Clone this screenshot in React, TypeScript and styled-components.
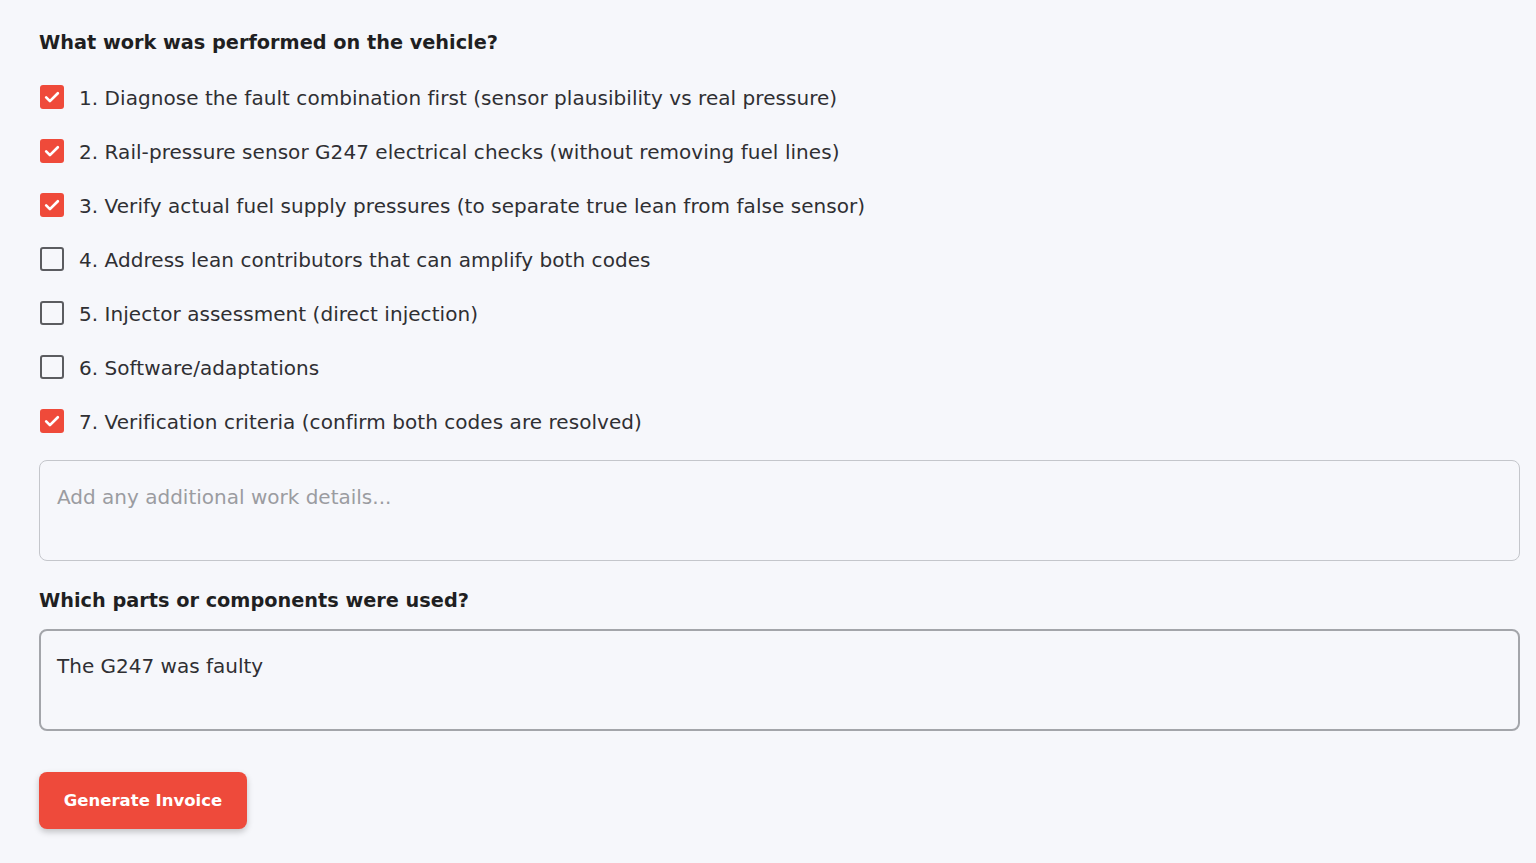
import React, { useState } from "react";
import styled, { createGlobalStyle } from "styled-components";

const GlobalStyle = createGlobalStyle`
  html, body { margin: 0; padding: 0; background: #f6f7fb; }
  body { font-family: "DejaVu Sans", "Open Sans", sans-serif; color: #2b2b2e; }
  * { box-sizing: border-box; }
`;

const Page = styled.div`
  padding: 29px 16px 34px 39px;
  display: flex;
  flex-direction: column;
`;

const Heading = styled.h2`
  margin: 0;
  font-size: 19.3px;
  font-weight: 700;
  color: #1f1f22;
  line-height: 28px;
`;

const List = styled.div`
  display: flex;
  flex-direction: column;
  gap: 30px;
  margin-top: 28px;
`;

const Row = styled.label`
  display: flex;
  align-items: center;
  gap: 15px;
  height: 24px;
  font-size: 20px;
  color: #2f2f33;
  cursor: pointer;
  padding-left: 1px;
`;

const RowText = styled.span`
  padding-top: 2px;
  letter-spacing: 0.05px;
`;

const Box = styled.span<{ $checked: boolean }>`
  width: 24px;
  height: 24px;
  flex: none;
  border-radius: 3px;
  display: flex;
  align-items: center;
  justify-content: center;
  background: ${(p) => (p.$checked ? "#ef4a3a" : "transparent")};
  border: ${(p) => (p.$checked ? "none" : "2px solid #5b5c60")};
`;

const TextArea = styled.textarea<{ $focused?: boolean }>`
  width: 100%;
  height: 101px;
  resize: none;
  border-radius: 8px;
  border: ${(p) => (p.$focused ? "2px solid #a3a5aa" : "1px solid #c4c6cb")};
  background: #f6f7fb;
  padding: ${(p) => (p.$focused ? "21px 16px" : "22px 17px")};
  font-family: inherit;
  font-size: 20px;
  line-height: 28px;
  color: #2f2f33;
  outline: none;
  &::placeholder { color: #9b9ca1; }
`;

const WorkArea = styled(TextArea)`
  margin-top: 27px;
`;

const SecondHeading = styled(Heading)`
  margin-top: 26px;
`;

const PartsArea = styled(TextArea)`
  margin-top: 14px;
  height: 102px;
`;

const Button = styled.button`
  margin-top: 41px;
  align-self: flex-start;
  width: 208px;
  height: 57px;
  border: none;
  border-radius: 8px;
  background: #ee4a3b;
  color: #fff;
  font-family: inherit;
  font-weight: 700;
  font-size: 16.5px;
  box-shadow: 0 3px 6px rgba(0, 0, 0, 0.22);
  cursor: pointer;
`;

const Check = () => (
  <svg width="20" height="20" viewBox="0 0 24 24" fill="none" stroke="#fff" strokeWidth="3.2" strokeLinecap="round" strokeLinejoin="round">
    <path d="M5 12.5l4.5 4.5L19 7.5" />
  </svg>
);

const items = [
  "1. Diagnose the fault combination first (sensor plausibility vs real pressure)",
  "2. Rail-pressure sensor G247 electrical checks (without removing fuel lines)",
  "3. Verify actual fuel supply pressures (to separate true lean from false sensor)",
  "4. Address lean contributors that can amplify both codes",
  "5. Injector assessment (direct injection)",
  "6. Software/adaptations",
  "7. Verification criteria (confirm both codes are resolved)",
];

export default function App() {
  const [checked, setChecked] = useState<boolean[]>([true, true, true, false, false, false, true]);
  const [parts, setParts] = useState("The G247 was faulty");
  const toggle = (i: number) => setChecked((c) => c.map((v, j) => (j === i ? !v : v)));
  return (
    <>
      <GlobalStyle />
      <Page>
        <Heading>What work was performed on the vehicle?</Heading>
        <List>
          {items.map((t, i) => (
            <Row key={i} onClick={() => toggle(i)}>
              <Box $checked={checked[i]}>{checked[i] && <Check />}</Box>
              <RowText>{t}</RowText>
            </Row>
          ))}
        </List>
        <WorkArea placeholder="Add any additional work details..." />
        <SecondHeading>Which parts or components were used?</SecondHeading>
        <PartsArea $focused value={parts} onChange={(e) => setParts(e.target.value)} />
        <Button>Generate Invoice</Button>
      </Page>
    </>
  );
}
